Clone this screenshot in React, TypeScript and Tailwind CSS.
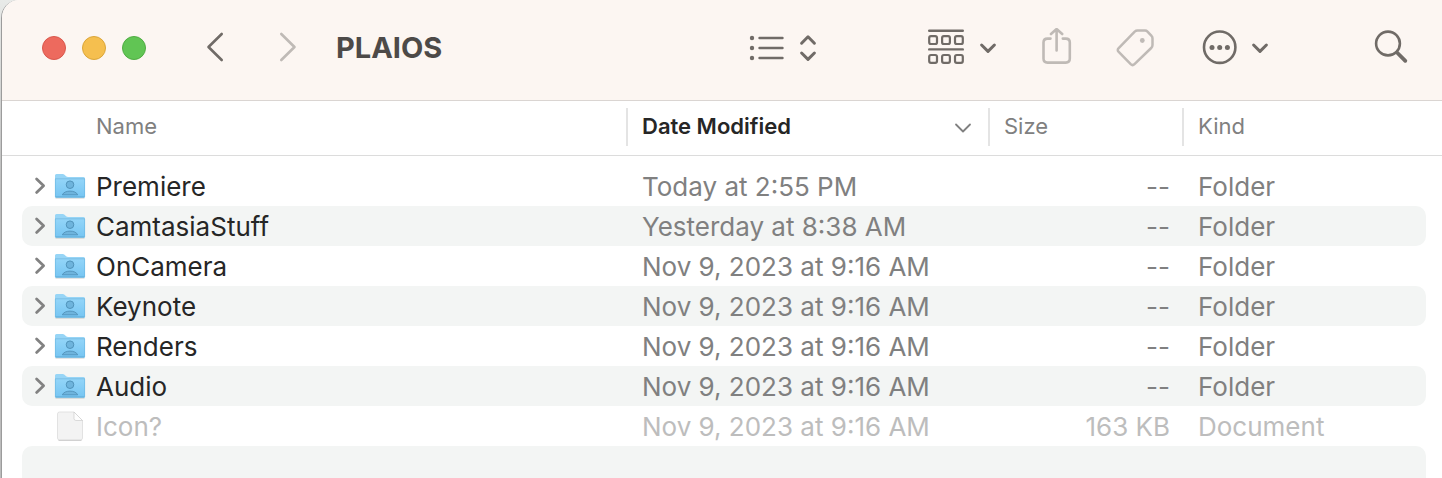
import { useState } from 'react';
import clsx from 'clsx';

interface FileEntry {
  name: string;
  modified: string;
  size: string;
  kind: 'Folder' | 'Document';
}

const ENTRIES: FileEntry[] = [
  { name: 'Premiere', modified: 'Today at 2:55 PM', size: '--', kind: 'Folder' },
  { name: 'CamtasiaStuff', modified: 'Yesterday at 8:38 AM', size: '--', kind: 'Folder' },
  { name: 'OnCamera', modified: 'Nov 9, 2023 at 9:16 AM', size: '--', kind: 'Folder' },
  { name: 'Keynote', modified: 'Nov 9, 2023 at 9:16 AM', size: '--', kind: 'Folder' },
  { name: 'Renders', modified: 'Nov 9, 2023 at 9:16 AM', size: '--', kind: 'Folder' },
  { name: 'Audio', modified: 'Nov 9, 2023 at 9:16 AM', size: '--', kind: 'Folder' },
  { name: 'Icon?', modified: 'Nov 9, 2023 at 9:16 AM', size: '163 KB', kind: 'Document' }
];

const ROW_GRID = 'grid grid-cols-[minmax(0,1fr)_362px_194px_244px]';

const FolderIcon = () => (
  <svg width="32" height="28" viewBox="0 0 32 28" aria-hidden="true">
    <defs>
      <linearGradient id="folder-front" x1="0" y1="0" x2="0" y2="1">
        <stop offset="0" stopColor="#93d5f9" />
        <stop offset="1" stopColor="#76c5f2" />
      </linearGradient>
    </defs>
    <path d="M1.5 26.2h29" stroke="#000" strokeOpacity="0.15" />
    <path d="M1 3.5Q1 2 2.5 2h6.2q1 0 1.8.7l1.6 1.5q.8.8 2 .8h15.400q1.500 0 1.500 1.500V24q0 1.500-1.500 1.500h-27Q1 25.500 1 24z" fill="#97d5f6" />
    <path d="M1 7h30v17q0 1.500-1.500 1.500h-27Q1 25.500 1 24z" fill="url(#folder-front)" />
    <path d="M1 6.800h30" stroke="#74b9e0" strokeWidth="0.8" />
    <path d="M1.400 25h29.200" stroke="#5fa9d3" strokeWidth="1" />
    <path d="M1.400 7v18M30.600 7v18" stroke="#6fb9e3" strokeWidth="0.7" />
    <circle cx="16" cy="12.700" r="3.800" fill="#6eb4dd" stroke="#4c8db5" strokeWidth="0.9" />
    <path d="M8.300 22.800c1.200-2.500 4.200-3.700 7.700-3.700s6.500 1.200 7.700 3.700z" fill="#6eb4dd" stroke="#4c8db5" strokeWidth="0.8" />
  </svg>
);

const DocumentIcon = () => (
  <svg width="32" height="32" viewBox="0 0 32 32" aria-hidden="true">
    <defs>
      <linearGradient id="document-fold" x1="0" y1="1" x2="1" y2="0">
        <stop offset="0.5" stopColor="#fdfdfd" />
        <stop offset="1" stopColor="#cfcfcf" />
      </linearGradient>
    </defs>
    <path d="M5.500 2h14.500l8.500 8.500V28q0 2-2 2h-21q-2 0-2-2V4q0-2 2-2z" fill="#f3f3f3" stroke="#dcdcdc" strokeWidth="0.8" />
    <path d="M4.500 30.400h23" stroke="#c4c4c4" strokeWidth="0.8" />
    <path d="M20 2v6.500q0 2 2 2h6.500z" fill="url(#document-fold)" stroke="#c6c6c6" strokeWidth="0.6" />
  </svg>
);

const Toolbar = () => (
  <header className="flex items-center bg-[#fcf6f2] border-b border-[#dad5d2] pl-10 pr-[33px] pb-1 h-[101px] text-[#706b67]">
    <div className="flex gap-4">
      <button aria-label="Close" className="size-6 rounded-full bg-[#ed6a5e] border border-[#d9584d]" />
      <button aria-label="Minimize" className="size-6 rounded-full bg-[#f5bf4f] border border-[#dba63a]" />
      <button aria-label="Zoom" className="size-6 rounded-full bg-[#61c554] border border-[#50ad43]" />
    </div>

    <nav className="flex gap-[53px] ml-[59px]">
      <button aria-label="Back">
        <svg width="20" height="40" viewBox="205 28 20 40" fill="none" stroke="currentColor" strokeWidth="2.600" strokeLinecap="round" strokeLinejoin="round">
          <path d="M221.700 34 208.500 47l13.200 13" />
        </svg>
      </button>
      <button aria-label="Forward" disabled className="text-[#bfbab6]">
        <svg width="20" height="40" viewBox="278 28 20 40" fill="none" stroke="currentColor" strokeWidth="2.600" strokeLinecap="round" strokeLinejoin="round">
          <path d="M281.300 34 294.500 47l-13.200 13" />
        </svg>
      </button>
    </nav>

    <h1 className="ml-[38px] text-[29px] leading-10 font-bold text-[#4d4a48]">PLAIOS</h1>

    <div className="flex items-center ml-auto">
      <button aria-label="View as list">
        <svg width="72" height="40" viewBox="748 28 72 40" fill="none" stroke="currentColor" strokeLinecap="round" strokeLinejoin="round">
          <g fill="currentColor" stroke="none">
            <circle cx="752" cy="38" r="2.200" />
            <circle cx="752" cy="48" r="2.200" />
            <circle cx="752" cy="58" r="2.200" />
          </g>
          <path d="M759.500 38h23M759.500 48h23M759.500 58h23" strokeWidth="2.400" />
          <path d="m801.600 43.200 6.400-6.400 6.400 6.400M801.600 53l6.400 6.400 6.400-6.400" strokeWidth="3" />
        </svg>
      </button>
      <button aria-label="Group items" className="ml-[106px]">
        <svg width="72" height="40" viewBox="926 28 72 40" fill="none" stroke="currentColor" strokeLinecap="round" strokeLinejoin="round">
          <path d="M929.200 30.700h33.600M929.200 49.400h33.600" strokeWidth="2.400" />
          <g strokeWidth="2.200">
            <rect x="929.200" y="36.200" width="7.800" height="7.800" rx="1.800" />
            <rect x="942.100" y="36.200" width="7.800" height="7.800" rx="1.800" />
            <rect x="955" y="36.200" width="7.800" height="7.800" rx="1.800" />
            <rect x="929.200" y="55" width="7.800" height="7.800" rx="1.800" />
            <rect x="942.100" y="55" width="7.800" height="7.800" rx="1.800" />
            <rect x="955" y="55" width="7.800" height="7.800" rx="1.800" />
          </g>
          <path d="m981.600 45 6.400 6.400 6.400-6.400" strokeWidth="3" />
        </svg>
      </button>
      <button aria-label="Share" disabled className="ml-10 text-[#bfbab6]">
        <svg width="38" height="40" viewBox="1038 27 38 40" fill="none" stroke="currentColor" strokeWidth="2.600" strokeLinecap="round" strokeLinejoin="round">
          <path d="M1050.500 37.600h-3q-4 0-4 4v16q0 4 4 4h18.300q4 0 4-4v-16q0-4-4-4h-3" />
          <path d="M1056.600 49.500V28M1051 33l5.600-5 5.600 5" />
        </svg>
      </button>
      <button aria-label="Edit tags" disabled className="ml-10 text-[#bfbab6]">
        <svg width="40" height="40" viewBox="1116 28 40 40" fill="none" stroke="currentColor" strokeWidth="2.500" strokeLinejoin="round">
          <path d="M1137.500 30.600h7.500q1.500 0 2.500 1l4 4.300q1 1 1 2.500v6.600q0 1.800-1.300 3l-16.700 16.200q-1.900 1.800-3.800 0l-12-12.300q-1.900-1.900 0-3.800l16-16.500q1.200-1 2.800-1z" />
          <circle cx="1142.300" cy="40.500" r="2.400" fill="currentColor" stroke="none" />
        </svg>
      </button>
      <button aria-label="More actions" className="ml-11">
        <svg width="70" height="40" viewBox="1200 28 70 40" fill="none" stroke="currentColor" strokeLinecap="round" strokeLinejoin="round">
          <circle cx="1219.700" cy="47.200" r="15.700" strokeWidth="2.600" />
          <g fill="currentColor" stroke="none">
            <circle cx="1212" cy="47.400" r="2.500" />
            <circle cx="1219.700" cy="47.400" r="2.500" />
            <circle cx="1227.400" cy="47.400" r="2.500" />
          </g>
          <path d="m1253.600 45 6.400 6.400 6.400-6.400" strokeWidth="3" />
        </svg>
      </button>
      <button aria-label="Search" className="ml-[103px]">
        <svg width="36" height="40" viewBox="1373 28 36 40" fill="none" stroke="currentColor" strokeLinecap="round">
          <circle cx="1388" cy="43.500" r="11.900" strokeWidth="2.600" />
          <path d="m1397 52.500 8.300 8.300" strokeWidth="3.800" />
        </svg>
      </button>
    </div>
  </header>
);

interface FileRowProps {
  entry: FileEntry;
  striped: boolean;
}

const FileRow = ({ entry, striped }: FileRowProps) => {
  const [expanded, setExpanded] = useState(false);
  const isFolder = entry.kind === 'Folder';

  return (
    <tr
      className={clsx(
        ROW_GRID,
        'h-10 rounded-[10px] text-[26px] leading-[42px]',
        striped && 'bg-[#f3f5f4]',
        isFolder ? 'text-[#808080]' : 'text-[#bdbdbd]'
      )}
    >
      <td className={clsx('flex h-10 pl-3', isFolder && 'text-[#262626]')}>
        <span className="flex items-center w-5 shrink-0">
          {isFolder && (
            <button
              aria-label={`Expand ${entry.name}`}
              aria-expanded={expanded}
              onClick={() => setExpanded(!expanded)}
              className={clsx('text-[#828282]', expanded && 'rotate-90')}
            >
              <svg width="12" height="20" viewBox="0 0 12 20" fill="none" stroke="currentColor" strokeWidth="2.800" strokeLinecap="round" strokeLinejoin="round">
                <path d="m2.600 3 7 6.700-7 6.700" />
              </svg>
            </button>
          )}
        </span>
        <span className="flex items-center shrink-0">
          {isFolder ? <FolderIcon /> : <DocumentIcon />}
        </span>
        <span className="pl-[10px] truncate">{entry.name}</span>
      </td>
      <td className="pl-4 truncate">{entry.modified}</td>
      <td className="pr-3 text-right truncate">{entry.size}</td>
      <td className="pl-4 truncate">{entry.kind}</td>
    </tr>
  );
};

export default function App() {
  return (
    <div className="min-h-screen flex pl-px bg-linear-to-b from-[#e8eae8] to-[#bcbcbc] to-40% font-['Inter',sans-serif]">
      <main className="flex-1 min-w-0 overflow-hidden bg-white border-l border-[#9c9c9c] rounded-tl-[18px]">
        <Toolbar />

        <table className="block w-full">
          <thead className="block border-b border-[#dcdcdc] pl-5 pr-4 pt-[7px] pb-[9px]">
            <tr className={clsx(ROW_GRID, 'h-[38px] text-[22px] leading-9 text-left text-[#808080]')}>
              <th scope="col" className="pl-[74px] font-normal">Name</th>
              <th scope="col" aria-sort="descending" className="flex justify-between border-l-2 border-[#e4e4e4] pl-[14px] pr-4 font-semibold text-[#262626]">
                Date Modified
                <svg width="18" height="38" viewBox="0 0 18 38" fill="none" stroke="#808080" strokeWidth="1.800" strokeLinecap="round" strokeLinejoin="round" aria-hidden="true">
                  <path d="m2 16.500 7 7 7-7" />
                </svg>
              </th>
              <th scope="col" className="border-l-2 border-[#e4e4e4] pl-[14px] font-normal">Size</th>
              <th scope="col" className="border-l-2 border-[#e4e4e4] pl-[14px] font-normal">Kind</th>
            </tr>
          </thead>
          <tbody className="block pl-5 pr-4 pt-[10px]">
            {ENTRIES.map((entry, index) => (
              <FileRow key={entry.name} entry={entry} striped={index % 2 === 1} />
            ))}
          </tbody>
        </table>

        {/* Empty striped row that runs off the bottom of the list */}
        <div className="ml-5 mr-4 h-8 rounded-t-[10px] bg-[#f3f5f4]" />
      </main>
    </div>
  );
}
